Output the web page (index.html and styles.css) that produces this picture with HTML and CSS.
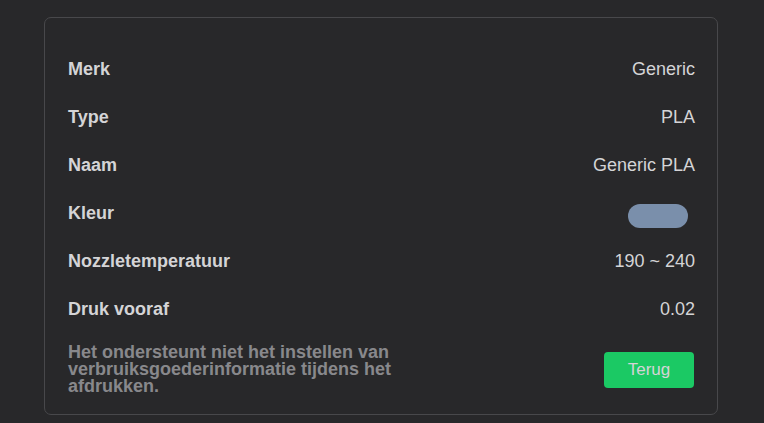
FILE: index.html
```html
<!DOCTYPE html>
<html lang="nl">
<head>
<meta charset="utf-8">
<link rel="stylesheet" href="styles.css">
</head>
<body>
<div class="card">
  <div class="row"><span class="label">Merk</span><span class="value">Generic</span></div>
  <div class="row"><span class="label">Type</span><span class="value">PLA</span></div>
  <div class="row"><span class="label">Naam</span><span class="value">Generic PLA</span></div>
  <div class="row"><span class="label">Kleur</span><span class="swatch"></span></div>
  <div class="row"><span class="label">Nozzletemperatuur</span><span class="value">190 ~ 240</span></div>
  <div class="row"><span class="label">Druk vooraf</span><span class="value">0.02</span></div>
  <div class="footer">
    <p class="note">Het ondersteunt niet het instellen van verbruiksgoederinformatie tijdens het afdrukken.</p>
    <button class="btn">Terug</button>
  </div>
</div>
</body>
</html>
```
FILE: styles.css
```css
html, body {
  margin: 0;
  padding: 0;
  background: #28282a;
}
body {
  padding: 17px 46px 0 44px;
  font-family: "Liberation Sans", Arial, sans-serif;
  font-size: 18px;
  color: #d4d4d6;
}
.card {
  border: 1px solid #48484b;
  border-radius: 7px;
  padding: 27px 22px 0 23px;
  box-sizing: border-box;
  height: 398px;
}
.row {
  height: 48px;
  display: flex;
  align-items: center;
  justify-content: space-between;
}
.label {
  font-weight: bold;
}
.swatch {
  width: 60px;
  height: 24px;
  border-radius: 12px;
  background: #7a8fab;
  margin: 6px 7px 0 0;
}
.footer {
  display: flex;
  align-items: flex-start;
  justify-content: space-between;
  padding-top: 11px;
}
.note {
  margin: 0;
  width: 340px;
  font-weight: bold;
  line-height: 17px;
  color: #88888c;
}
.btn {
  width: 90px;
  height: 36px;
  margin: 8px 1px 0 0;
  border: none;
  border-radius: 4px;
  background: #1bc964;
  color: #d4d4d6;
  font-family: "Liberation Sans", Arial, sans-serif;
  font-size: 17px;
  padding: 0;
}
```
